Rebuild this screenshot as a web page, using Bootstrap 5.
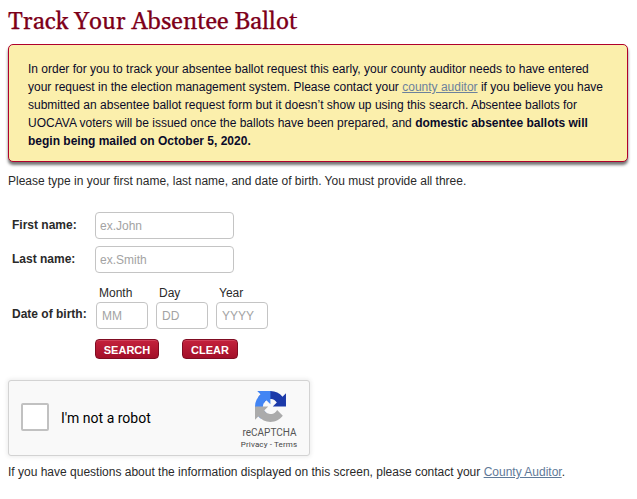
<!DOCTYPE html>
<html lang="en">
<head>
<meta charset="utf-8">
<meta name="viewport" content="width=device-width, initial-scale=1">
<title>Track Your Absentee Ballot</title>
<link href="https://cdn.jsdelivr.net/npm/bootstrap@5.3.0/dist/css/bootstrap.min.css" rel="stylesheet">
<style>
body{font:12px/18px "Liberation Sans",Arial,sans-serif;color:#2a2a2a;background:#fff;overflow:hidden}
a{color:#5f7a99}
.page-title{font:24px/30px Georgia,Gelasio,"Liberation Serif",serif;color:#7d0019;height:30px;margin:0 0 7px;padding-top:0;white-space:nowrap;-webkit-text-stroke:.25px #7d0019}
main{padding-top:7px}
.notice{height:118px;margin-right:1px;padding:15px 19px;background:#fbefac;border:1px solid #b0002c;border-radius:5px;box-shadow:0 3px 3px rgba(0,0,0,.55);color:#0a0a2a;white-space:nowrap}
.notice a{color:#6c819c}
.intro{margin:10px 0 22px}
.field-label{width:83px;font-weight:bold;white-space:nowrap;padding-bottom:2px}
.form-control{height:27px;padding:1px 5px 0;border:1px solid #c4c4c4;border-radius:4px;font-size:12px;line-height:18px}
.form-control::placeholder{color:#a3a3a3;opacity:1}
.wide{width:139px;padding-left:4px}
.row-last{margin-top:7px}
.row-dob{margin-top:11px}
.dob-label{width:84px;padding-bottom:6px}
.part{width:52px}
.part label{display:block;padding-left:3px;height:18px}
.actions{margin:10px 0 21px 83px}
.action{height:20px;padding:2px 0 0;line-height:16px;font-size:11px;font-weight:bold;color:#fff;border:1px solid #7f0c22;border-radius:4px;background:linear-gradient(#c4213c,#a30f29);box-shadow:inset 0 1px 0 #d04058}
.action:hover{color:#fff}
.search{width:64px;margin-right:23px}
.clear{width:56px}
.captcha{width:302px;height:76px;background:#f9f9f9;border:1px solid #d3d3d3;border-radius:3px;box-shadow:0 0 4px 1px rgba(0,0,0,.08);font-family:Roboto,sans-serif;color:#000}
.tick{width:28px;height:28px;border:2px solid #c1c1c1;border-radius:2px;background:#fff;margin:0 12px 2px}
.robot{font-size:14px}
.brand-col{width:80px;padding-top:10px;color:#555}
.brand-col svg{width:31px;height:31px;margin-left:2px}
.brand-name{font-size:10px;line-height:11px;margin:5px 0 1px 1px}
.brand-links{font-size:8px;line-height:11px;letter-spacing:.13px;color:#444}
.footnote{margin:7px 0 0}
</style>
</head>
<body>
<main class="px-2">
<h1 class="page-title">Track Your Absentee Ballot</h1>
<div class="notice">In order for you to track your absentee ballot request this early, your county auditor needs to have entered<br>your request in the election management system. Please contact your <a href="#">county auditor</a> if you believe you have<br>submitted an absentee ballot request form but it doesn’t show up using this search. Absentee ballots for<br>UOCAVA voters will be issued once the ballots have been prepared, and <b>domestic absentee ballots will<br>begin being mailed on October 5, 2020.</b></div>
<p class="intro">Please type in your first name, last name, and date of birth. You must provide all three.</p>
<form class="ps-1">
<div class="d-flex align-items-center"><label class="field-label" for="first">First name:</label><input class="form-control wide" id="first" placeholder="ex.John"></div>
<div class="row-last d-flex align-items-center"><label class="field-label" for="last">Last name:</label><input class="form-control wide" id="last" placeholder="ex.Smith"></div>
<div class="row-dob d-flex align-items-end"><div class="field-label dob-label">Date of birth:</div>
<div class="d-flex gap-2">
<div class="part"><label for="mm">Month</label><input class="form-control" id="mm" placeholder="MM"></div>
<div class="part"><label for="dd">Day</label><input class="form-control" id="dd" placeholder="DD"></div>
<div class="part"><label for="yy">Year</label><input class="form-control" id="yy" placeholder="YYYY"></div>
</div></div>
<div class="actions d-flex"><button type="button" class="btn action search">SEARCH</button><button type="button" class="btn action clear">CLEAR</button></div>
</form>
<div class="captcha d-flex justify-content-between">
<div class="d-flex align-items-center"><span class="tick"></span><span class="robot">I'm not a robot</span></div>
<div class="brand-col d-flex flex-column align-items-center">
<svg viewBox="0 0 64 64" aria-hidden="true"><path d="M64 31.955l-.033-1.37V4.687l-7.16 7.16C50.948 4.674 42.033.093 32.05.093c-10.4 0-19.622 4.96-25.458 12.64l11.736 11.86a15.55 15.55 0 0 1 4.754-5.334c2.05-1.6 4.952-2.906 8.968-2.906.485 0 .86.057 1.135.163 4.976.393 9.288 3.14 11.828 7.124l-8.307 8.307L64 31.953" fill="#1c3aa9"/><path d="M31.862.094l-1.37.033H4.594l7.16 7.16C4.58 13.147 0 22.06 0 32.046c0 10.4 4.96 19.622 12.64 25.458L24.5 45.768a15.55 15.55 0 0 1-5.334-4.754c-1.6-2.05-2.906-4.952-2.906-8.968 0-.485.057-.86.163-1.135.393-4.976 3.14-9.288 7.124-11.828l8.307 8.307L31.86.095" fill="#4285f4"/><path d="M.001 32.045l.033 1.37v25.898l7.16-7.16c5.86 7.173 14.774 11.754 24.76 11.754 10.4 0 19.622-4.96 25.458-12.64l-11.736-11.86a15.55 15.55 0 0 1-4.754 5.334c-2.05 1.6-4.952 2.906-8.968 2.906-.485 0-.86-.057-1.135-.163-4.976-.393-9.288-3.14-11.828-7.124l8.307-8.307c-10.522.04-22.4.066-27.295-.005" fill="#ababab"/></svg>
<span class="brand-name">reCAPTCHA</span><span class="brand-links">Privacy - Terms</span>
</div></div>
<p class="footnote">If you have questions about the information displayed on this screen, please contact your <a href="#">County Auditor</a>.</p>
</main>
<script src="https://cdn.jsdelivr.net/npm/bootstrap@5.3.0/dist/js/bootstrap.bundle.min.js"></script>
</body>
</html>
